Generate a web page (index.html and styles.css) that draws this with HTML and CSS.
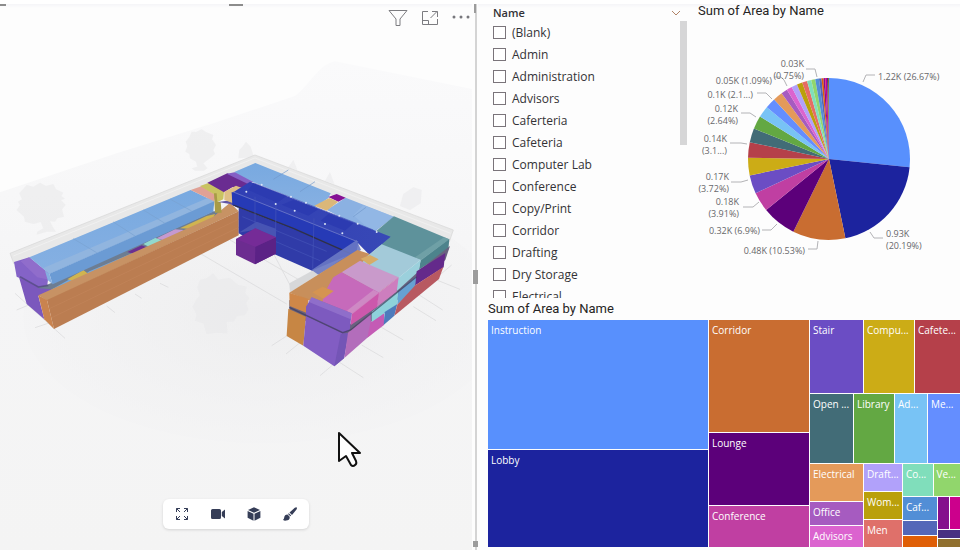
FILE: index.html
```html
<!DOCTYPE html>
<html lang="en">
<head>
<meta charset="utf-8">
<title>Building area report</title>
<link rel="stylesheet" href="styles.css">
</head>
<body>
<main class="report">
  <section class="viewer" aria-label="3D model">
    <svg class="scene" viewBox="0 0 472 550" preserveAspectRatio="xMidYMid slice" aria-hidden="true">
      <defs>
        <linearGradient id="ground" x1="0" y1="0" x2="0" y2="1">
          <stop offset="0" stop-color="#fafafb"/><stop offset=".45" stop-color="#f5f5f6"/><stop offset="1" stop-color="#f4f4f4"/>
        </linearGradient>
        <radialGradient id="shade"><stop offset="0" stop-color="#eaeaeb"/><stop offset=".75" stop-color="#f1f1f2"/><stop offset="1" stop-color="#f3f3f4"/></radialGradient>
        <linearGradient id="roomBlue" x1="0" y1="0" x2="0" y2="1"><stop offset="0" stop-color="#78a9e0"/><stop offset="1" stop-color="#86b0e2"/></linearGradient>
        <linearGradient id="lobby" x1="0" y1="0" x2="1" y2="0"><stop offset="0" stop-color="#303fb4"/><stop offset="1" stop-color="#3848b6"/></linearGradient>
      </defs>
      <g transform="translate(0 50) scale(.33333)">
        <path fill="url(#ground)" d="M0 427 350 310 640 220 885 138Q905 122 940 80 975 38 1005 34L1440 122V1510H0Z"/>
        <ellipse cx="790" cy="800" rx="720" ry="380" fill="url(#shade)" opacity=".6"/>
        <g fill="#e8e8e9" opacity=".5">
          <path d="M80 405 100 410 120 398 138 408 160 402 168 418 190 428 184 438 195 446 183 450 197 465 186 478 192 500 172 505 165 515 150 514 158 530 168 545 140 545 110 554 112 545 130 535 122 516 100 522 75 515 72 500 50 480 60 466 54 455 66 448 58 430Z"/>
          <path d="M575 245 588 246 605 238 618 246 640 255 636 268 648 285 640 300 645 312 630 325 610 340 622 355 612 362 585 362 575 355 592 350 588 335 570 325 568 312 556 305 562 288 557 275 568 262Z"/>
          <path d="M738 275 752 290 762 322 715 325 718 300 726 292ZM880 330 892 360 865 352ZM990 367 1003 402 975 392ZM1240 412 1265 420 1262 460 1230 480 1200 468 1210 432Z"/>
          <path d="M600 690 620 685 640 670 655 690 670 686 690 684 715 705 740 710 735 728 748 745 738 760 745 778 735 795 712 798 700 815 680 815 682 850 648 848 620 852 610 820 585 812 590 795 578 770 588 750 600 735 592 712Z"/>
        </g>
        <g stroke="#d8d8d9" stroke-width="2" fill="none">
          <path d="M45 730 195 865M50 780 110 755M105 833 205 800M320 768 345 788M405 732 425 745M480 700 505 712M600 610 860 762M690 570 1210 870M820 610 870 705M960 977 1355 645M858 912 935 850M815 887 880 845M1000 925 1090 983M1085 885 1150 923M1240 770 1308 812M1250 730 1328 780M1310 690 1380 718"/>
        </g>
        <path fill="#e8e8e8" stroke="#d6d6d6" stroke-width="2" d="M30 610 765 315 1360 540 1348 575 765 342 90 624 42 642Z"/>
        <path stroke="#f0f0f0" stroke-width="3" fill="none" d="M40 618 765 324 1352 550"/>

        <path fill="#7b58bd" d="M57 682 150 712 175 718 115 738 133 808 80 762Z"/>
        <path fill="#6d7d92" d="M140 705 640 484 662 484 662 500 180 720 110 714Z"/>
        <path fill="#70a8df" d="M152 720 205 690 240 690 180 715ZM240 683 268 664 400 608 440 600 290 668Z"/>
        <path fill="#d0b450" d="M202 688 250 660 265 672 220 694ZM540 535 620 498 645 492 640 504 565 536Z"/>
        <path fill="#6b2f91" d="M382 606 425 586 445 594 405 613Z"/>
        <path fill="#92d9cd" d="M430 582 465 563 492 573 450 592Z"/>
        <path fill="#c599d0" d="M470 565 525 538 552 540 495 572Z"/>
        <path fill="#c79264" d="M115 736 640 500 690 458 716 484 142 752Z"/>
        <path fill="#bb7d51" d="M141 750 716 484V556L162 837Z"/>
        <path fill="#c9834f" d="M115 736 141 750 162 837 133 808Z"/>
        <path stroke="#c2855b" stroke-width="2" fill="none" d="M148 776 716 508M155 803 716 532"/>

        <path fill="#8463c7" d="M42 636 88 622 146 670 142 706 118 711 50 680Z"/>
        <path fill="#9672cd" d="M62 634 88 622 146 670 142 688 112 682Z" opacity=".7"/>
        <path fill="url(#roomBlue)" d="M88 622 572 420 643 454 148 671Z"/>
        <path fill="#91b5df" d="M130 654 628 442 643 456 148 671Z"/>
        <path fill="#6b9bd4" d="M148 671 643 454 640 485 158 703Z"/>
        <path fill="#85aee0" d="M148 671 158 703 143 690 135 662Z"/>
        <path stroke="#78a1d0" stroke-width="2" fill="none" d="M220 566 290 608M340 516 405 558M430 480 495 520M510 447 575 483"/>

        <path fill="#e0a195" d="M572 420 605 409 648 435 642 454Z"/>
        <path fill="#c9c361" d="M600 408 632 397 672 426 670 448 648 458 646 435Z"/>
        <path fill="#a89b48" d="M642 430 650 430 652 455 662 456 665 488 645 488Z"/>
        <path fill="#6a2c91" d="M622 398 682 370 755 398 738 414 697 412 672 427Z"/>
        <path fill="#8560c5" d="M680 371 712 365 766 393 744 402Z"/>
        <path fill="#5f54a4" d="M655 456 697 450 716 475 690 462Z"/>
        <path fill="#dfbf85" d="M673 425 708 407 732 416 698 432V459L673 450Z"/>
        <path fill="url(#roomBlue)" d="M703 366 766 339 992 430 985 445 945 472 760 396Z"/>
        <path fill="#8bb1e2" d="M980 480 1037 443 1182 500 1118 550Z"/>
        <path fill="#97bae7" d="M1060 496 1090 466 1182 500 1118 545Z" opacity=".6"/>
        <path stroke="#7198cc" stroke-width="2" fill="none" d="M820 388 865 360M900 425 945 395M1060 500 1098 472"/>
        <path fill="#851094" d="M985 441 1010 432 1037 443 1015 455Z"/>
        <path fill="#dbb779" d="M943 467 988 444 1015 455 980 482Z"/>
        <path fill="#5e929b" d="M1182 499 1348 568 1262 630 1140 590 1118 552Z"/>
        <path fill="#4d838c" d="M1262 630 1348 566 1345 600 1256 660Z"/>
        <path fill="#78a8ac" d="M1245 622 1332 562 1348 568 1262 632Z" opacity=".65"/>

        <path fill="#303ba8" d="M716 472 1070 612 950 668 827 614 716 550Z"/>
        <path fill="#5260b8" opacity=".7" d="M716 548 770 515 828 536V565L770 538Z"/>
        <path fill="url(#lobby)" d="M695 430 750 395 1172 560 1108 614 1070 575Z"/>
        <path fill="#263ab6" d="M695 426 1075 576 1068 616 697 465Z"/>
        <path fill="#2c3bb1" d="M760 400 860 438 832 458 745 420ZM880 450 955 478 925 497 845 464ZM985 492 1060 520 1035 542 962 512Z"/>
        <path stroke="#303146" stroke-width="4" fill="none" d="M700 465 880 535 1065 617"/>
        <path stroke="#626fc6" stroke-width="3" fill="none" d="M700 426 1075 576"/>
        <path stroke="#4655b8" stroke-width="2" fill="none" d="M828 460 826 600M942 505 938 655M765 440V540M727 500 980 604M828 575 960 632M760 398 1120 540"/>
        <g fill="#dce4f6"><circle cx="739" cy="425" r="3"/><circle cx="785" cy="404" r="3"/><circle cx="827" cy="462" r="3"/><circle cx="873" cy="440" r="3"/><circle cx="884" cy="482" r="3"/><circle cx="918" cy="458" r="3"/><circle cx="975" cy="522" r="3"/><circle cx="1018" cy="497" r="3"/><circle cx="1027" cy="550" r="3"/><circle cx="1073" cy="521" r="3"/><circle cx="1130" cy="546" r="3"/></g>
        <path fill="#6c2c90" d="M708 567 766 535 828 562V611L765 643 708 615Z"/>
        <path fill="#5b2286" d="M766 590 828 562V611L765 643Z"/>
        <path fill="#7b2b9b" d="M708 567 766 535 828 562 766 590Z" opacity=".65"/>
        <path fill="#d7d8da" d="M868 700 945 658 1040 618 870 728Z"/>
        <path fill="#6a79c4" d="M935 660 1070 570 1083 600 955 674Z" opacity=".9"/>

        <path fill="#69627f" d="M868 750 1040 830 1350 588 1336 630 1044 872 868 790Z"/>
        <path fill="#c88f5b" d="M868 728 1072 600 1112 613 1140 600 1196 682 1135 729 1055 792 925 750Z"/>
        <path fill="#cf8748" d="M868 728 926 747 920 789 869 768Z"/>
        <path fill="#a3cad9" d="M1102 618 1145 583 1262 629 1192 686 1085 640Z"/>
        <path fill="#9bd0dc" d="M1192 686 1262 629 1257 663 1190 724Z"/>
        <path fill="#d7ac67" d="M1082 626 1110 615 1136 628 1108 645Z"/>
        <path fill="#c99acb" d="M1025 667 1080 632 1196 682 1135 729Z"/>
        <path fill="#cd7ebe" d="M1135 729 1196 682 1190 725 1130 772Z"/>
        <path fill="#c66abb" d="M968 755 970 735 1000 682 1025 667 1138 728 1055 792Z"/>
        <path fill="#cc58ac" d="M1055 790 1137 727 1131 771 1052 826Z"/>
        <path fill="#d29ac9" opacity=".65" d="M1040 783 1120 720 1138 728 1056 793Z"/>
        <path fill="#d59451" d="M937 727 968 710 1001 723 970 746Z"/>
        <path fill="#7d5abf" d="M918 770 935 742 1055 790 1049 842 1030 850 918 797Z"/>
        <path fill="#9a7acf" opacity=".65" d="M935 742 1055 790 1052 808 925 755Z"/>

        <path fill="#c78644" d="M865 776 918 800 910 887 860 858Z"/>
        <path fill="#825dc3" d="M918 797 1035 852 1046 848 1032 925 1003 949 910 887Z"/>
        <path fill="#7455b6" d="M1022 852 1046 848 1032 925 1003 949Z"/>
        <path fill="#b36dbb" d="M1044 848 1112 790 1114 853 1033 924Z"/>
        <path fill="#c45bb5" d="M1112 815 1152 788V825L1102 863Z"/>
        <path fill="#8ed2db" d="M1115 785 1195 724 1192 763 1115 816Z"/>
        <path fill="#66a1d2" d="M1195 724 1250 678 1246 714 1192 764Z"/>
        <path fill="#4d7bbc" d="M1154 786 1192 762 1183 797 1151 825Z"/>
        <path fill="#642a8b" d="M1250 664 1336 609 1331 652 1246 706Z"/>
        <path fill="#b85961" d="M1246 706 1330 651 1317 687 1183 797 1192 764Z"/>
        <path stroke="#3d3c58" stroke-width="4" opacity=".7" fill="none" d="M868 772 1028 848 1052 840 1250 680"/>
        <path stroke="#4e4979" stroke-width="5" opacity=".7" fill="none" d="M60 680 115 711 145 706"/>
      </g>
      <path fill="#fff" stroke="#111" stroke-width="2" stroke-linejoin="round" d="M339 433V461L346 456 351 465Q353 467 355 465 357 464 356 461L352 453H360Z"/>
    </svg>

    <header class="visual-header">
      <button class="icon-button" aria-label="Filters">
        <svg width="20" height="20" viewBox="0 0 20 20"><path d="M1 2.500H19L12 11V17.500H8V11Z"/></svg>
      </button>
      <button class="icon-button" aria-label="Focus mode">
        <svg width="18" height="18" viewBox="0 0 18 18"><path d="M7 2.500H1.500V15.500H16.500V10M1.500 11.500H7.500V15.500M9.500 9 16 2.500M11 2.500H16.500V8"/></svg>
      </button>
      <button class="icon-button" aria-label="More options">
        <svg width="18" height="18" viewBox="0 0 18 18"><g class="dots"><circle cx="2" cy="8" r="1.500"/><circle cx="9" cy="8" r="1.500"/><circle cx="16" cy="8" r="1.500"/></g></svg>
      </button>
    </header>

    <div class="toolbar" role="toolbar" aria-label="Model tools">
      <button class="tool" aria-label="Fit view">
        <svg width="14" height="14" viewBox="0 0 14 14"><path class="line" d="M1.500 5V1.500H5M1.500 1.500 5 5M9 1.500H12.500V5M12.500 1.500 9 5M1.500 9V12.500H5M1.500 12.500 5 9M9 12.500H12.500V9M12.500 12.500 9 9"/></svg>
      </button>
      <button class="tool" aria-label="Camera">
        <svg width="14" height="14" viewBox="0 0 14 14"><path d="M1.500 2H8.500Q10 2 10 3.500V10.500Q10 12 8.500 12H1.500Q0 12 0 10.500V3.500Q0 2 1.500 2ZM10.800 5 14 2.500V11.500L10.800 9Z"/></svg>
      </button>
      <button class="tool" aria-label="Sections">
        <svg width="14" height="14" viewBox="0 0 14 14"><path d="M7 .3 13 3 7 5.800 1 3ZM.6 4 6.500 6.700V13.700L.6 10.700ZM13.400 4 7.500 6.700V13.700L13.400 10.700Z"/></svg>
      </button>
      <button class="tool" aria-label="Paint">
        <svg width="14" height="14" viewBox="0 0 14 14"><path d="M13.700.4Q14.300 1.200 13.500 2.500L9 8 6.500 5.500 11.800.8Q13 0 13.700.4ZM5.800 6.200 8.200 8.600 7.300 9.300 5 7ZM4.500 7.600 6.700 9.800Q7 13.500 3 13.600 1 13.800 0 12.800 1 12.500 1.200 10.500 1.500 7.800 4.500 7.600Z"/></svg>
      </button>
    </div>
  </section>

  <div class="splitter" role="separator"><span class="grip grip-top"></span><span class="grip"></span><span class="grip grip-bottom"></span></div>

  <div class="charts">
    <div class="upper">
      <section class="slicer">
        <header class="slicer-head"><h2>Name</h2>
          <button class="icon-button" aria-label="Expand"><svg width="10" height="10" viewBox="0 0 10 10"><path class="chevron" d="M1 3 5 7 9 3"/></svg></button>
        </header>
        <div class="slicer-body">
          <ul class="options">
            <li><label><input type="checkbox">(Blank)</label></li>
            <li><label><input type="checkbox">Admin</label></li>
            <li><label><input type="checkbox">Administration</label></li>
            <li><label><input type="checkbox">Advisors</label></li>
            <li><label><input type="checkbox">Caferteria</label></li>
            <li><label><input type="checkbox">Cafeteria</label></li>
            <li><label><input type="checkbox">Computer Lab</label></li>
            <li><label><input type="checkbox">Conference</label></li>
            <li><label><input type="checkbox">Copy/Print</label></li>
            <li><label><input type="checkbox">Corridor</label></li>
            <li><label><input type="checkbox">Drafting</label></li>
            <li><label><input type="checkbox">Dry Storage</label></li>
            <li><label><input type="checkbox">Electrical</label></li>
          </ul>
          <div class="scroll-thumb"></div>
        </div>
      </section>

      <section class="pie-card">
        <h2 class="chart-title">Sum of Area by Name</h2>
        <svg class="pie" viewBox="690 22 270 276" role="img" aria-label="Sum of Area by Name">
          <g id="slices"></g>
          <path class="leader" d="M863 82 866 75H875M870 232 874 238H883M818 241 817 249H808M777 224 771 230H762M759 202 753 207H743M748 180 741 182H731M747 144 741 143H730M756 117 750 113H741M772 99 766 93H757M787 86 784 80 781 77H774M817 77 815 69H806"/>
          <g class="labels">
            <text x="878" y="80">1.22K (26.67%)</text>
            <text x="886" y="237">0.93K</text><text x="886" y="249">(20.19%)</text>
            <g text-anchor="end">
              <text x="805" y="254">0.48K (10.53%)</text>
              <text x="760" y="234">0.32K (6.9%)</text>
              <text x="739" y="205">0.18K</text><text x="739" y="217">(3.91%)</text>
              <text x="729" y="180">0.17K</text><text x="729" y="192">(3.72%)</text>
              <text x="727" y="142">0.14K</text><text x="727" y="154">(3.1...)</text>
              <text x="738" y="112">0.12K</text><text x="738" y="124">(2.64%)</text>
              <text x="753" y="98">0.1K (2.1...)</text>
              <text x="772" y="84">0.05K (1.09%)</text>
              <text x="804" y="67">0.03K</text><text x="804" y="79">(0.75%)</text>
            </g>
          </g>
        </svg>
      </section>
    </div>

    <section class="tree-card">
      <h2 class="chart-title">Sum of Area by Name</h2>
      <div class="treemap" id="treemap"></div>
    </section>
  </div>
</main>
<script src="script.js"></script>
</body>
</html>
```
FILE: styles.css
```css
* {
  box-sizing: border-box;
}

body {
  margin: 0;
  background: #fdfdfd;
  color: #333236;
  font-family: "Open Sans", "Noto Sans", sans-serif;
  font-size: 12px;
}

h2,
ul {
  margin: 0;
  padding: 0;
}

button {
  display: flex;
  padding: 0;
  border: 0;
  background: none;
}

.report {
  display: grid;
  grid-template-columns: 472fr 6px 482fr;
  height: 100vh;
  border-top: 4px solid #fff;
  background: linear-gradient(#f5f5f8, #fdfdfd 4px);
}

.viewer {
  position: relative;
  display: flex;
  flex-direction: column;
  justify-content: space-between;
  min-width: 0;
}

.viewer::before,
.viewer::after {
  content: "";
  position: absolute;
  top: 0;
  height: 2px;
  background: #8c8c8c;
}

.viewer::before {
  left: 0;
  width: 6px;
}

.viewer::after {
  left: calc(50% - 7px);
  width: 14px;
}

.scene {
  position: absolute;
  inset: -4px 0 0;
  width: 100%;
  height: calc(100% + 4px);
}

.visual-header {
  position: relative;
  display: flex;
  align-items: center;
  justify-content: flex-end;
  gap: 13px;
  padding: 4px 2px 0 0;
}

.icon-button path {
  fill: none;
  stroke: #7c7c80;
}

.icon-button .chevron {
  stroke: #b08468;
}

.dots {
  fill: #77777c;
}

.toolbar {
  position: relative;
  display: flex;
  align-self: center;
  gap: 22px;
  margin-bottom: 21px;
  padding: 8px 12px;
  border-radius: 6px;
  background: #fff;
  box-shadow: 0 1px 3px #0002;
}

.tool svg {
  fill: #353d57;
}

.tool .line {
  fill: none;
  stroke: #353d57;
}

.splitter {
  display: flex;
  flex-direction: column;
  align-items: center;
  justify-content: space-between;
  padding-bottom: 3px;
  background: linear-gradient(90deg, #fdfdfd 3px, #d4d4d4 3px 5px, #fdfdfd 5px);
}

.grip {
  width: 5px;
  height: 14px;
  background: #9c9c9c;
}

.grip-top {
  width: 2px;
  height: 9px;
}

.grip-bottom {
  height: 6px;
}

.charts {
  display: grid;
  grid-template-rows: 294fr 252fr;
  min-width: 0;
  min-height: 0;
}

.upper {
  display: grid;
  grid-template-columns: 212fr 270fr;
  min-height: 0;
}

.slicer {
  display: flex;
  flex-direction: column;
  min-height: 0;
  padding: 0 3px 0 15px;
}

.slicer-head {
  display: flex;
  flex-shrink: 0;
  align-items: center;
  justify-content: space-between;
  height: 17px;
  padding-right: 6px;
}

.slicer-head h2 {
  font-size: 11px;
  font-weight: 600;
}

.slicer-body {
  display: flex;
  justify-content: space-between;
  min-height: 0;
  overflow: hidden;
}

.options {
  list-style: none;
}

.options label {
  display: flex;
  align-items: center;
  gap: 6px;
  height: 22px;
}

.options input {
  appearance: none;
  width: 13px;
  height: 13px;
  margin: 0;
  border: 1px solid #7a747a;
  background: #fff;
}

.scroll-thumb {
  width: 7px;
  height: 124px;
  background: #d6d6d7;
}

.chart-title {
  font: 400 13px/22px Roboto, sans-serif;
  color: #252423;
}

.pie-card {
  display: flex;
  flex-direction: column;
  min-height: 0;
}

.pie-card .chart-title {
  padding: 0 0 4px 8px;
  line-height: 14px;
}

.pie {
  flex: 1;
  width: 100%;
  min-height: 0;
}

.leader {
  fill: none;
  stroke: #b3b3b6;
}

.labels {
  fill: #67676a;
  font-size: 9px;
}

.tree-card {
  display: flex;
  flex-direction: column;
  min-height: 0;
  padding: 0 0 3px 10px;
}

.treemap {
  display: flex;
  flex: 1;
  min-height: 0;
}

.treemap div {
  min-width: 0;
  min-height: 0;
  flex-basis: 0;
}

.split {
  display: flex;
  gap: 1px;
}

.split.column {
  flex-direction: column;
}

.tile span {
  display: block;
  padding: 3px;
  color: #fff;
  font-size: 10px;
  line-height: 14px;
  white-space: nowrap;
}
```
FILE: script.js
```js
const slices = [
  [26.67, '#5890fd'], [20.19, '#1c239e'], [10.53, '#c96d31'], [6.9, '#5c007a'],
  [3.91, '#c03fa2'], [3.72, '#6b4dc4'], [3.5, '#ccac16'], [3.1, '#b5404a'],
  [2.8, '#426c77'], [2.64, '#63a843'], [2.3, '#78c3f5'], [2.1, '#648eff'],
  [1.9, '#e49a5a'], [1.25, '#a65bc0'], [1.09, '#db63cf'], [1.15, '#b1a1fa'],
  [1.1, '#baa00b'], [1.0, '#e66c64'], [0.85, '#80debb'], [0.8, '#91d66c'],
  [0.75, '#528ed6'], [0.5, '#5367b8'], [0.38, '#df5e05'], [0.35, '#85108d'],
  [0.35, '#cc008c'], [0.2, '#493082'], [0.2, '#8f6f2e']
];
const total = slices.reduce((sum, [value]) => sum + value, 0);
const point = share => {
  const angle = share / total * 2 * Math.PI;
  return (829 + 81 * Math.sin(angle)).toFixed(2) + ' ' + (159 - 81 * Math.cos(angle)).toFixed(2);
};
let start = 0;
for (const [value, colour] of slices) {
  const path = document.createElementNS('http://www.w3.org/2000/svg', 'path');
  path.setAttribute('d', `M829 159L${point(start)}A81 81 0 0 1 ${point(start + value)}Z`);
  path.setAttribute('fill', colour);
  document.getElementById('slices').append(path);
  start += value;
}

// A tile is [weight, colour, label]; a group is [weight, 'row' | 'column', children].
const tree = [1, 'row', [
  [220, 'column', [[129, '#5890fd', 'Instruction'], [97, '#1c239e', 'Lobby']]],
  [100, 'column', [[112, '#c96d31', 'Corridor'], [72, '#5c007a', 'Lounge'], [41, '#c03fa2', 'Conference']]],
  [150, 'column', [
    [73, 'row', [[53, '#6b4dc4', 'Stair'], [50, '#ccac16', 'Compu...'], [45, '#b5404a', 'Cafete...']]],
    [69, 'row', [[43, '#426c77', 'Open ...'], [40, '#63a843', 'Library'], [32, '#78c3f5', 'Ad...'], [32, '#648eff', 'Me...']]],
    [83, 'row', [
      [53, 'column', [[37, '#e49a5a', 'Electrical'], [23, '#a65bc0', 'Office'], [21, '#db63cf', 'Advisors']]],
      [38, 'column', [[27, '#b1a1fa', 'Draft...'], [27, '#baa00b', 'Wom...'], [27, '#df706a', 'Men']]],
      [57, 'column', [
        [32, 'row', [[29, '#80debb', 'Co...'], [26, '#91d66c', 'Ve...']]],
        [50, 'row', [
          [33, 'column', [[23, '#528ed6', 'Caf...'], [14, '#5367b8'], [11, '#df5e05']]],
          [22, 'column', [[32, 'row', [[11, '#85108d'], [10, '#cc008c']]], [8, '#493082'], [8, '#8f6f2e']]]
        ]]
      ]]
    ]]
  ]]
]];
function build([weight, kind, content]) {
  const box = document.createElement('div');
  box.style.flexGrow = weight;
  if (Array.isArray(content)) {
    box.className = 'split ' + kind;
    box.append(...content.map(build));
    return box;
  }
  box.className = 'tile';
  box.style.background = kind;
  if (content) {
    const label = document.createElement('span');
    label.textContent = content;
    box.append(label);
  }
  return box;
}
document.getElementById('treemap').append(build(tree));
```
